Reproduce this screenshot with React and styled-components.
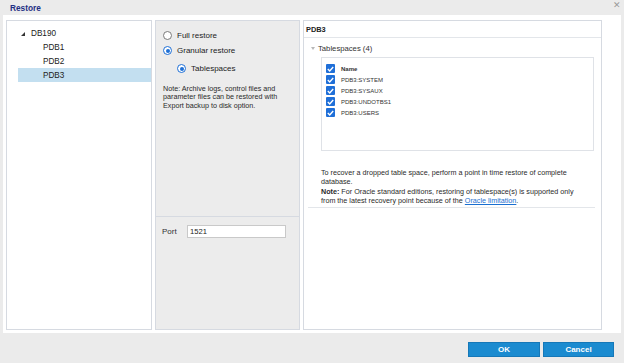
import React from 'react'
import styled, { createGlobalStyle } from 'styled-components'

const GlobalStyle = createGlobalStyle`
  html, body {
    margin: 0;
    padding: 0;
    background: #ebebeb;
    font-family: "Liberation Sans", Arial, sans-serif;
    color: #222;
  }
`

const Dialog = styled.div`
  width: 624px;
  height: 363px;
  display: flex;
  flex-direction: column;
  background: #ebebeb;
  overflow: hidden;
`

const TitleBar = styled.div`
  height: 15px;
  flex: 0 0 15px;
  display: flex;
  align-items: center;
  justify-content: space-between;
  padding: 0 3px 0 10px;
`

const Title = styled.span`
  font-size: 8.3px;
  font-weight: bold;
  color: #1f3084;
`

const Close = styled.span`
  font-size: 9px;
  color: #9a9a9a;
  line-height: 1;
  margin-top: -4px;
`

const Body = styled.div`
  flex: 0 0 318px;
  margin: 0 3px;
  background: #fff;
  box-sizing: border-box;
  padding: 5px 21px 3px 3px;
  display: grid;
  grid-template-columns: 146px 145px 299px;
  column-gap: 3px;
`

const Panel = styled.div`
  border: 1px solid #d6dae1;
  background: ${p => (p.$muted ? '#ececec' : '#fff')};
  box-sizing: border-box;
  display: flex;
  flex-direction: column;
  min-height: 0;
`

/* tree */
const Tree = styled.div`
  padding-top: 5px;
`

const TreeRow = styled.div`
  height: 14px;
  margin-left: 11px;
  display: flex;
  align-items: center;
  padding-left: ${p => (p.$child ? '25px' : '3px')};
  font-size: 8.2px;
  color: #222;
  background: ${p => (p.$selected ? '#c3dff0' : 'transparent')};
`

const Twisty = styled.svg`
  width: 4px;
  height: 4px;
  margin-right: 6px;
  margin-top: 1px;
`

/* middle */
const OptionsSection = styled.div`
  flex: 0 0 196px;
  box-sizing: border-box;
  border-bottom: 1px solid #d6dae1;
  padding: 7px 7px 0 7px;
`

const RadioRow = styled.label`
  height: 15px;
  display: flex;
  align-items: center;
  gap: 5px;
  font-size: 8px;
  margin-left: ${p => (p.$indent ? '14px' : '0')};
  margin-top: ${p => (p.$indent ? '3px' : '0')};
`

const RadioDot = styled.span`
  width: 9px;
  height: 9px;
  box-sizing: border-box;
  border-radius: 50%;
  border: 1px solid ${p => (p.$on ? '#1d6fd6' : '#7a7a7a')};
  background: #fff;
  display: flex;
  align-items: center;
  justify-content: center;
  &::after {
    content: '';
    width: 4px;
    height: 4px;
    border-radius: 50%;
    background: ${p => (p.$on ? '#1d6fd6' : 'transparent')};
  }
`

const Note = styled.p`
  margin: 9px 0 0 0;
  font-size: 7.2px;
  line-height: 8.3px;
  color: #2a2a2a;
`

const PortSection = styled.div`
  display: flex;
  align-items: center;
  padding: 8px 0 0 6px;
`

const PortLabel = styled.span`
  width: 25px;
  font-size: 8px;
  font-weight: normal;
  color: #333;
`

const PortInput = styled.div`
  width: 99px;
  height: 13px;
  box-sizing: border-box;
  border: 1px solid #c9c9c9;
  background: #fff;
  font-size: 7.6px;
  display: flex;
  align-items: center;
  padding-left: 2px;
`

/* right */
const Header = styled.div`
  height: 17px;
  flex: 0 0 17px;
  box-sizing: border-box;
  border-bottom: 1px solid #e3e6ea;
  display: flex;
  align-items: center;
  padding-left: 2px;
  font-size: 7.4px;
  font-weight: bold;
`

const GroupLabel = styled.div`
  display: flex;
  align-items: center;
  height: 12px;
  margin-top: 4px;
  padding-left: 7px;
  font-size: 7.7px;
  color: #333;
`

const Caret = styled.svg`
  width: 4px;
  height: 3px;
  margin-right: 3px;
`

const ListBox = styled.div`
  margin: 3px 7px 0 17px;
  height: 94px;
  box-sizing: border-box;
  border: 1px solid #dfe2e7;
  padding: 5px 0 0 4px;
`

const CheckRow = styled.div`
  height: 11px;
  display: flex;
  align-items: center;
  gap: 6px;
  font-size: 6px;
  font-weight: ${p => (p.$head ? 'bold' : 'normal')};
  color: #333;
`

const Check = styled.span`
  width: 9px;
  height: 9px;
  border-radius: 1px;
  background: #1f6fd8;
  display: flex;
  align-items: center;
  justify-content: center;
`

const InfoBlock = styled.div`
  margin: 17px 6px 0 4px;
  padding: 0 7px 2px 13px;
  border-bottom: 1px solid #e3e6ea;
  font-size: 7.2px;
  line-height: 9px;
  color: #2a2a2a;
`

const InfoPara = styled.p`
  margin: 0 0 0.5px 0;
`

const Link = styled.a`
  color: #1a6fd0;
  text-decoration: underline;
`

/* footer */
const Footer = styled.div`
  flex: 1;
  display: flex;
  justify-content: flex-end;
  align-items: flex-start;
  gap: 3px;
  padding: 9px 10px 0 0;
`

const Button = styled.button`
  width: ${p => p.$w}px;
  height: 15px;
  border: 1px solid #1678b8;
  background: #1b8bd0;
  color: #fff;
  font-family: "Liberation Sans", Arial, sans-serif;
  font-size: 8px;
  font-weight: bold;
  padding: 0;
  cursor: pointer;
`

const CheckMark = () => (
  <svg width="7" height="6" viewBox="0 0 7 6">
    <path d="M0.8 3.1 L2.7 4.9 L6.2 1" fill="none" stroke="#fff" strokeWidth="1.4" />
  </svg>
)

const tablespaces = ['PDB3:SYSTEM', 'PDB3:SYSAUX', 'PDB3:UNDOTBS1', 'PDB3:USERS']

export default function App() {
  return (
    <>
      <GlobalStyle />
      <Dialog>
        <TitleBar>
          <Title>Restore</Title>
          <Close>✕</Close>
        </TitleBar>

        <Body>
          <Panel>
            <Tree>
              <TreeRow>
                <Twisty viewBox="0 0 4 4">
                  <polygon points="4,0 4,4 0,4" fill="#333" />
                </Twisty>
                DB190
              </TreeRow>
              <TreeRow $child>PDB1</TreeRow>
              <TreeRow $child>PDB2</TreeRow>
              <TreeRow $child $selected>PDB3</TreeRow>
            </Tree>
          </Panel>

          <Panel $muted>
            <OptionsSection>
              <RadioRow><RadioDot />Full restore</RadioRow>
              <RadioRow><RadioDot $on />Granular restore</RadioRow>
              <RadioRow $indent><RadioDot $on />Tablespaces</RadioRow>
              <Note>
                Note: Archive logs, control files and parameter files can be restored with
                Export backup to disk option.
              </Note>
            </OptionsSection>
            <PortSection>
              <PortLabel>Port</PortLabel>
              <PortInput>1521</PortInput>
            </PortSection>
          </Panel>

          <Panel>
            <Header>PDB3</Header>
            <GroupLabel>
              <Caret viewBox="0 0 4 3">
                <polygon points="0,0 4,0 2,3" fill="#b8b8b8" />
              </Caret>
              Tablespaces (4)
            </GroupLabel>
            <ListBox>
              <CheckRow $head><Check><CheckMark /></Check>Name</CheckRow>
              {tablespaces.map(t => (
                <CheckRow key={t}><Check><CheckMark /></Check>{t}</CheckRow>
              ))}
            </ListBox>
            <InfoBlock>
              <InfoPara>
                To recover a dropped table space, perform a point in time restore of complete database.
              </InfoPara>
              <InfoPara>
                <b>Note:</b> For Oracle standard editions, restoring of tablespace(s) is supported only
                from the latest recovery point because of the <Link>Oracle limitation</Link>.
              </InfoPara>
            </InfoBlock>
          </Panel>
        </Body>

        <Footer>
          <Button $w={72}>OK</Button>
          <Button $w={71}>Cancel</Button>
        </Footer>
      </Dialog>
    </>
  )
}
